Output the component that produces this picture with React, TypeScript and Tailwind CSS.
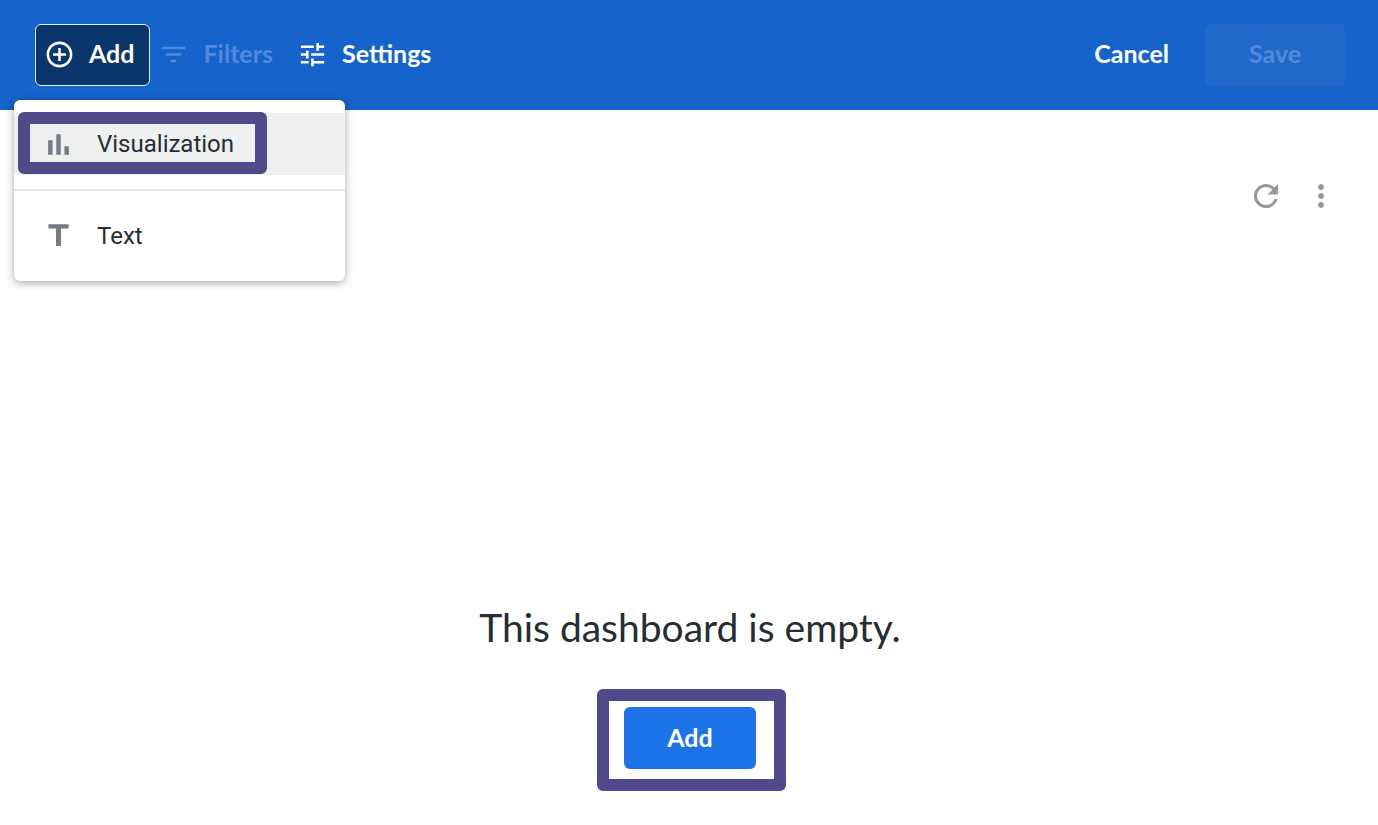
import React from 'react';
import { MdAddCircleOutline, MdFilterList, MdMoreVert, MdRefresh, MdTune } from 'react-icons/md';

const BarsIcon: React.FC = () => (
  <svg viewBox="0 0 24 24" className="size-[31px] shrink-0" fill="currentColor" aria-hidden="true">
    <path d="M4 8.7h3.4V20H4zM10.3 4h3.4v16h-3.4zM16.6 13.3H20V20h-3.4z" />
  </svg>
);

const TextIcon: React.FC = () => (
  <svg viewBox="0 0 24 24" className="size-[31px] shrink-0" fill="currentColor" aria-hidden="true">
    <path d="M4.2 2.5h15.6v3.4h-5.9v13.5h-3.8V5.9H4.2z" />
  </svg>
);

const Header: React.FC = () => (
  <header className="flex items-center justify-between bg-[#1563cb] py-6 pr-[33px] pl-[35px] text-[25px] leading-8 font-bold text-white">
    <div className="flex items-center">
      <button
        type="button"
        aria-haspopup="menu"
        aria-expanded="true"
        className="flex h-[62px] items-center gap-[14px] rounded-md border border-[#e4effc] bg-[#0b366b] pr-[15px] pb-[2px] pl-2"
      >
        <MdAddCircleOutline className="size-[31px]" />
        <span className="pb-[2px]">Add</span>
      </button>
      <button type="button" disabled className="flex h-[62px] items-center gap-[14px] pr-[14px] pb-[2px] pl-2 text-[#5289dc]">
        <MdFilterList className="size-[31px]" />
        <span className="pb-[2px]">Filters</span>
      </button>
      <button type="button" className="flex h-[62px] items-center gap-[14px] pr-4 pb-[2px] pl-[10px]">
        <MdTune className="size-[31px]" />
        <span className="pb-[2px]">Settings</span>
      </button>
    </div>
    <div className="flex items-center gap-9">
      <button type="button" className="h-[62px] pb-1">Cancel</button>
      <button type="button" disabled className="h-[62px] w-[140px] rounded-md bg-[#2069cb] pb-1 text-[#5289dc]">
        Save
      </button>
    </div>
  </header>
);

const AddMenu: React.FC = () => (
  <div
    role="menu"
    className="absolute top-[100px] left-[14px] w-[331px] rounded-md bg-white pt-[13px] pb-[14px] font-[Roboto,sans-serif] text-[24px] leading-8 text-[#262d33] shadow-[0_2px_8px_rgba(0,0,0,0.35)]"
  >
    <button type="button" role="menuitem" className="flex h-[62px] w-full items-center gap-[23px] bg-[#eef0f0] pl-[29px]">
      <span className="text-[#747a83]"><BarsIcon /></span>
      Visualization
    </button>
    <hr className="my-[14px] border-t-2 border-[#e2e4e5]" />
    <button type="button" role="menuitem" className="flex h-[62px] w-full items-center gap-[23px] pl-[29px]">
      <span className="text-[#747a83]"><TextIcon /></span>
      Text
    </button>
    {/* Callout frame around the Visualization entry */}
    <div className="pointer-events-none absolute top-3 left-1 h-[62px] w-[249px] rounded-md border-12 border-[#504a8b]" />
  </div>
);

const App: React.FC = () => {
  return (
    <div className="relative flex min-h-screen flex-col bg-white font-[Lato,sans-serif]">
      <Header />
      <AddMenu />
      <main className="flex flex-1 flex-col justify-between pt-[68px] pb-14 pl-[2px]">
        <div className="flex justify-end gap-[19px] pr-[39px] text-[#939899]">
          <button type="button" aria-label="Reload"><MdRefresh className="size-9" /></button>
          <button type="button" aria-label="Dashboard actions"><MdMoreVert className="size-9" /></button>
        </div>
        <div className="flex flex-col items-center gap-14">
          <h1 className="text-[39px] leading-12 text-[#262d33]">This dashboard is empty.</h1>
          <div className="relative">
            <button type="button" className="h-[62px] w-[132px] rounded-md bg-[#1d73e8] text-[25px] font-bold text-white">
              Add
            </button>
            {/* Callout frame around the Add button */}
            <div className="pointer-events-none absolute -top-[18px] -right-[30px] -bottom-[22px] -left-[27px] rounded-md border-12 border-[#504a8b]" />
          </div>
        </div>
      </main>
    </div>
  );
};

export default App;
